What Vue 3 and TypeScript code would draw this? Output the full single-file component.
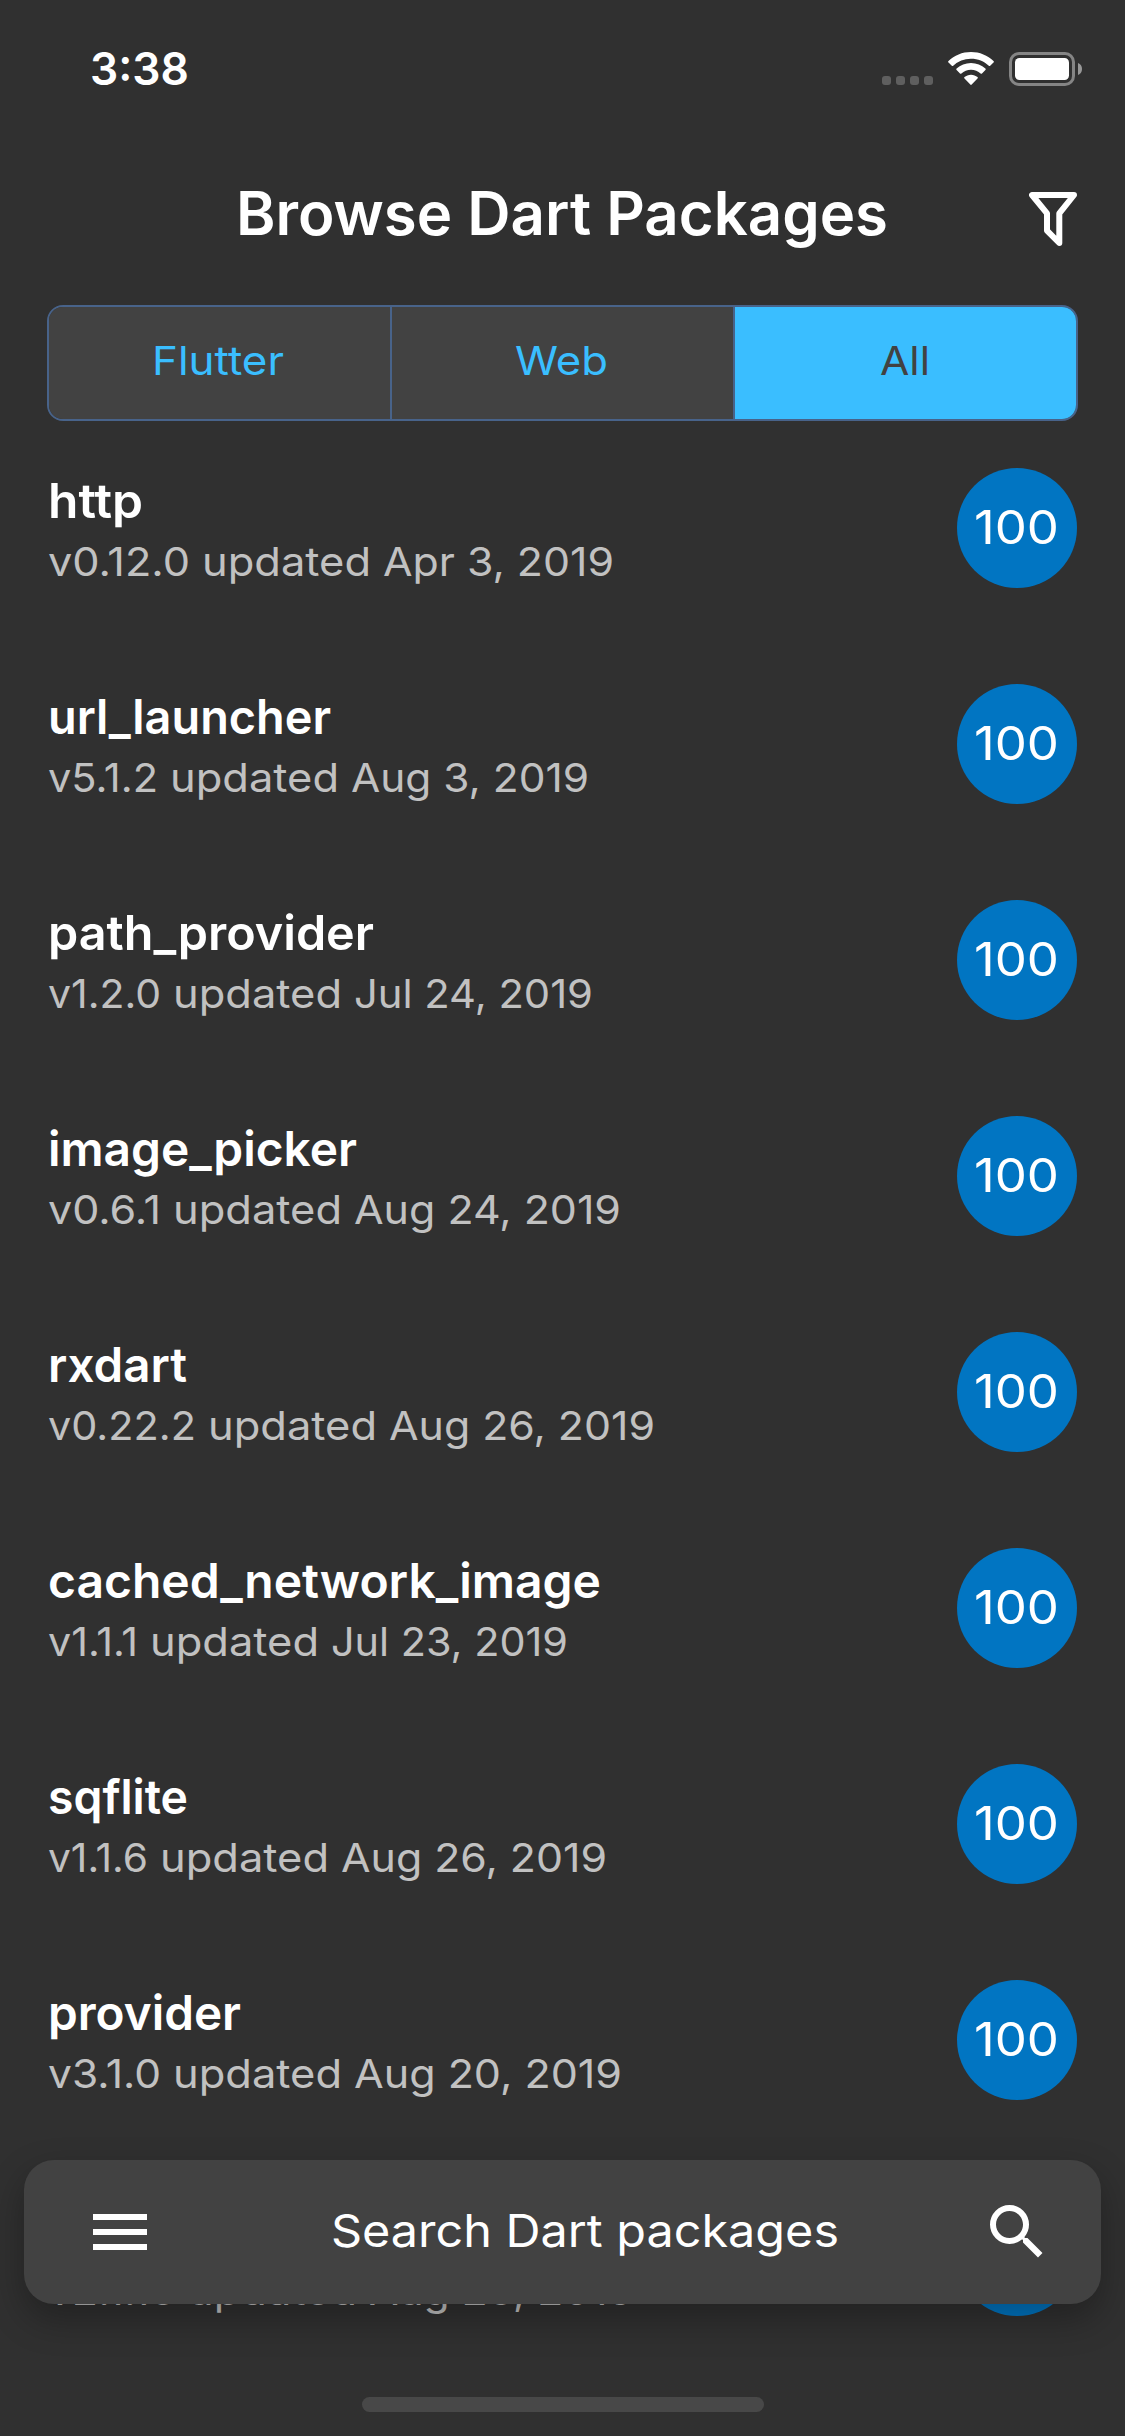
<script setup lang="ts">
import { ref } from 'vue'

interface Pkg {
  name: string
  nameWidth: number
  version: string
  versionWidth: number
  date: string
  dateWidth: number
  score: number
}

const platforms = [
  { label: 'Flutter', width: 132 },
  { label: 'Web', width: 93 },
  { label: 'All', width: 50 },
]
const active = ref('All')

const packages: Pkg[] = [
  { name: 'http', nameWidth: 95, version: 'v0.12.0', versionWidth: 142, date: 'Apr 3, 2019', dateWidth: 231, score: 100 },
  { name: 'url_launcher', nameWidth: 283, version: 'v5.1.2', versionWidth: 110, date: 'Aug 3, 2019', dateWidth: 238, score: 100 },
  { name: 'path_provider', nameWidth: 326, version: 'v1.2.0', versionWidth: 113, date: 'Jul 24, 2019', dateWidth: 239, score: 100 },
  { name: 'image_picker', nameWidth: 309, version: 'v0.6.1', versionWidth: 113, date: 'Aug 24, 2019', dateWidth: 267, score: 100 },
  { name: 'rxdart', nameWidth: 139, version: 'v0.22.2', versionWidth: 148, date: 'Aug 26, 2019', dateWidth: 266, score: 100 },
  { name: 'cached_network_image', nameWidth: 553, version: 'v1.1.1', versionWidth: 90, date: 'Jul 23, 2019', dateWidth: 237, score: 100 },
  { name: 'sqflite', nameWidth: 140, version: 'v1.1.6', versionWidth: 100, date: 'Aug 26, 2019', dateWidth: 266, score: 100 },
  { name: 'provider', nameWidth: 193, version: 'v3.1.0', versionWidth: 113, date: 'Aug 20, 2019', dateWidth: 268, score: 100 },
  { name: 'dio', nameWidth: 66, version: 'v2.1.13', versionWidth: 128, date: 'Aug 23, 2019', dateWidth: 265, score: 100 },
]

// Widens or narrows a line of text so that it spans the given width.
const vFit = {
  mounted(el: HTMLElement, binding: { value: number }) {
    const natural = el.getBoundingClientRect().width
    el.style.transform = `scaleX(${(binding.value / natural).toFixed(4)})`
    el.style.marginRight = `${(binding.value - natural).toFixed(2)}px`
  },
}
</script>

<template>
  <div class="screen">
    <div class="status">
      <span v-fit="99" class="time">3:38</span>
      <div class="indicators">
        <div class="dots"><i v-for="n in 4" :key="n"></i></div>
        <svg class="wifi" width="46" height="34" viewBox="0 0 46 34">
          <path d="M23 0C14.300 0 6.300 3.400.5 8.900a1 1 0 0 0 0 1.500l3.300 3.300a1 1 0 0 0 1.400 0A25.700 25.700 0 0 1 23 6.700c6.900 0 13.100 2.600 17.800 7a1 1 0 0 0 1.400 0l3.300-3.300a1 1 0 0 0 0-1.500C39.700 3.400 31.700 0 23 0Z" />
          <path d="M23 11c-5.500 0-10.600 2.100-14.400 5.600a1 1 0 0 0 0 1.500l3.400 3.300a1 1 0 0 0 1.400 0c2.500-2.300 5.900-3.700 9.600-3.700s7.100 1.400 9.600 3.700a1 1 0 0 0 1.400 0l3.400-3.300a1 1 0 0 0 0-1.500C33.600 13.100 28.500 11 23 11Z" />
          <path d="M23 22.700c-2.500 0-4.800.9-6.500 2.400a1 1 0 0 0 0 1.500l5.800 6a1 1 0 0 0 1.400 0l5.800-6a1 1 0 0 0 0-1.500c-1.700-1.500-4-2.400-6.500-2.400Z" />
        </svg>
        <svg class="battery" width="74" height="34" viewBox="0 0 74 34">
          <rect x="1.500" y="1.500" width="63" height="31" rx="8.500" fill="none" stroke="#858585" stroke-width="3" />
          <rect x="6" y="6" width="54" height="22" rx="4.500" fill="#fff" />
          <path d="M69 11c2.600 1 4 3.300 4 6s-1.400 5-4 6Z" fill="#989898" />
        </svg>
      </div>
    </div>

    <header class="header">
      <h1><span v-fit="652">Browse Dart Packages</span></h1>
      <svg class="filter" width="48" height="54" viewBox="0 0 48 54">
        <path d="M3 3H45L30.300 21.400V51L18 38.600V21.400Z" />
      </svg>
    </header>

    <nav class="tabs">
      <button
        v-for="p in platforms"
        :key="p.label"
        class="tab"
        :class="{ on: active === p.label }"
        @click="active = p.label"
      ><span v-fit="p.width">{{ p.label }}</span></button>
    </nav>

    <main class="list">
      <article v-for="pkg in packages" :key="pkg.name" class="row">
        <div class="info">
          <div class="name"><span v-fit="pkg.nameWidth">{{ pkg.name }}</span></div>
          <div class="meta">
            <span v-fit="pkg.versionWidth">{{ pkg.version }}</span>
            <span v-fit="169">updated</span>
            <span v-fit="pkg.dateWidth">{{ pkg.date }}</span>
          </div>
        </div>
        <div class="score"><span v-fit="85">{{ pkg.score }}</span></div>
      </article>
    </main>

    <div class="search">
      <svg width="72" height="72" viewBox="0 0 24 24">
        <path d="M3 18h18v-2H3v2zm0-5h18v-2H3v2zm0-7v2h18V6H3z" />
      </svg>
      <div class="hint"><span v-fit="508">Search Dart packages</span></div>
      <svg width="72" height="72" viewBox="0 0 24 24">
        <path d="M15.500 14h-.79l-.28-.27A6.471 6.471 0 0 0 16 9.500 6.500 6.500 0 1 0 9.500 16c1.610 0 3.090-.59 4.230-1.570l.27.28v.79l5 4.990L20.490 19l-4.990-5zm-6 0C7.010 14 5 11.990 5 9.500S7.010 5 9.500 5 14 7.010 14 9.500 11.990 14 9.500 14z" />
      </svg>
    </div>
    <div class="home"></div>
  </div>
</template>

<style>
body {
  background: #303030;
}
</style>

<style scoped>
.screen {
  position: relative;
  display: flex;
  flex-direction: column;
  width: 1125px;
  height: 2436px;
  overflow: hidden;
  background: #303030;
  color: #fff;
  font-family: Inter, 'Liberation Sans', sans-serif;
  white-space: nowrap;
}
span {
  display: inline-block;
  flex: none;
  transform-origin: 0 50%;
}
.status {
  flex: none;
  display: flex;
  justify-content: space-between;
  align-items: center;
  box-sizing: border-box;
  height: 138px;
  padding: 0 42px 0 90px;
}
.time {
  font-size: 45px;
  font-weight: 600;
  line-height: 60px;
}
.indicators {
  display: flex;
}
.dots {
  display: flex;
  align-self: flex-end;
  gap: 5px;
  margin: 0 15px 1px 0;
}
.dots i {
  width: 9px;
  height: 9px;
  border-radius: 3px;
  background: #5f5f5f;
}
.wifi {
  fill: #fff;
  margin-right: 15px;
}
.header {
  flex: none;
  display: grid;
  grid-template-columns: 1fr auto 1fr;
  align-items: center;
  height: 150px;
  margin-bottom: 17px;
  padding: 0 48px;
}
.header h1 {
  grid-column: 2;
  margin: 0;
  font-size: 60px;
  font-weight: 600;
  line-height: 72px;
}
.filter {
  justify-self: end;
  margin-top: 12px;
  fill: none;
  stroke: #fff;
  stroke-width: 6;
  stroke-linejoin: round;
}
.tabs {
  flex: none;
  display: flex;
  box-sizing: border-box;
  height: 116px;
  margin: 0 47px 0 47px;
  border: 2px solid #48638a;
  border-radius: 16px;
  overflow: hidden;
}
.tab {
  flex: 1;
  padding: 0 3px 5px 0;
  border: 0;
  border-left: 2px solid #48638a;
  background: #424242;
  color: #3abeff;
  font: 400 40px/48px Inter, 'Liberation Sans', sans-serif;
}
.tab:first-child {
  border-left: 0;
}
.tab.on {
  padding: 0 2px 5px 1px;
  background: #3abeff;
  color: #424242;
}
.list {
  flex: none;
  margin-top: -1px;
}
.row {
  display: flex;
  align-items: center;
  justify-content: space-between;
  box-sizing: border-box;
  height: 216px;
  padding: 0 48px;
}
.info {
  padding-top: 7px;
}
.name {
  height: 61px;
  font-size: 48px;
  font-weight: 600;
  line-height: 60px;
}
.meta {
  display: flex;
  gap: 12px;
  height: 60px;
  color: #c1c1c1;
  font-size: 40px;
  line-height: 60px;
}
.row:last-child .meta {
  line-height: 61px;
}
.score {
  display: flex;
  align-items: center;
  justify-content: center;
  box-sizing: border-box;
  width: 120px;
  height: 120px;
  padding: 0 2px 3px 0;
  border-radius: 50%;
  background: #0175c2;
  font-size: 46px;
}
.search {
  position: absolute;
  left: 24px;
  right: 24px;
  bottom: 132px;
  display: flex;
  align-items: center;
  box-sizing: border-box;
  height: 144px;
  padding: 0 48px 0 60px;
  border-radius: 30px;
  background: #424242;
  box-shadow: 0 15px 36px rgba(0, 0, 0, 0.3);
}
.search svg {
  flex: none;
  fill: #fff;
}
.hint {
  flex: 1;
  padding: 0 0 3px 33px;
  text-align: center;
  font-size: 45px;
}
.home {
  position: absolute;
  left: 362px;
  bottom: 24px;
  width: 402px;
  height: 15px;
  border-radius: 8px;
  background: #484848;
}
</style>
